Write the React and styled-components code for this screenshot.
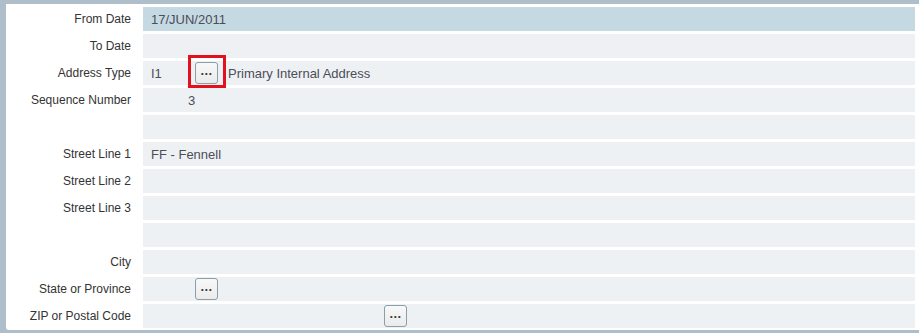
import React from "react";
import styled, { createGlobalStyle } from "styled-components";

const Global = createGlobalStyle`
  html, body { margin: 0; padding: 0; background: #aebfcb; }
  body { font-family: "Liberation Sans", Arial, sans-serif; }
`;

const Page = styled.div`
  width: 919px;
  height: 333px;
  box-sizing: border-box;
  padding: 4px 0 3px 6px;
  background: #aebfcb;
`;

const Panel = styled.div`
  height: 100%;
  box-sizing: border-box;
  background: #ffffff;
  border-bottom-left-radius: 3px;
  padding: 3px 4px 2px 0;
  display: grid;
  grid-template-columns: 125px 1fr;
  grid-auto-rows: 24px;
  column-gap: 12px;
  row-gap: 3px;
`;

const Label = styled.div`
  display: flex;
  align-items: center;
  justify-content: flex-end;
  font-size: 12px;
  color: #333333;
  white-space: nowrap;
`;

const Field = styled.div`
  display: flex;
  align-items: center;
  padding-left: ${(p) => p.$indent ?? 8}px;
  background: ${(p) => (p.$active ? "#c5d9e3" : "#eef1f4")};
  font-size: 13px;
  color: #4d4d57;
  white-space: nowrap;
`;

const Code = styled.span`
  width: ${(p) => p.$width}px;
  flex: none;
`;

const LookupWrap = styled.span`
  position: relative;
  display: inline-flex;
  margin-left: ${(p) => p.$offset ?? 0}px;
  ${(p) =>
    p.$highlight &&
    `
    &::after {
      content: "";
      position: absolute;
      left: -7px;
      right: -8px;
      top: -7px;
      bottom: -4px;
      border: 3px solid #e3101d;
      pointer-events: none;
    }
  `}
`;

const LookupButton = styled.button`
  width: 23px;
  height: 22px;
  box-sizing: border-box;
  padding: 0 0 6px 0;
  margin: 0;
  border: 1px solid #8b9eac;
  border-radius: 3px;
  background: linear-gradient(#f8f8f8, #ebebeb);
  font-family: "Liberation Sans", Arial, sans-serif;
  font-size: 13px;
  font-weight: bold;
  line-height: 1;
  color: #3a3a3a;
  display: flex;
  align-items: flex-end;
  justify-content: center;
  letter-spacing: 0.4px;
`;

const Description = styled.span`
  margin-left: 10px;
`;

const Lookup = ({ offset, highlight }) => (
  <LookupWrap $offset={offset} $highlight={highlight}>
    <LookupButton>...</LookupButton>
  </LookupWrap>
);

export default function App() {
  return (
    <>
      <Global />
      <Page>
        <Panel>
          <Label>From Date</Label>
          <Field $active>17/JUN/2011</Field>

          <Label>To Date</Label>
          <Field />

          <Label>Address Type</Label>
          <Field>
            <Code $width={44}>I1</Code>
            <Lookup highlight />
            <Description>Primary Internal Address</Description>
          </Field>

          <Label>Sequence Number</Label>
          <Field $indent={45}>3</Field>

          <Label />
          <Field />

          <Label>Street Line 1</Label>
          <Field>FF - Fennell</Field>

          <Label>Street Line 2</Label>
          <Field />

          <Label>Street Line 3</Label>
          <Field />

          <Label />
          <Field />

          <Label>City</Label>
          <Field />

          <Label>State or Province</Label>
          <Field $indent={0}>
            <Lookup offset={52} />
          </Field>

          <Label>ZIP or Postal Code</Label>
          <Field $indent={0}>
            <Lookup offset={241} />
          </Field>
        </Panel>
      </Page>
    </>
  );
}
